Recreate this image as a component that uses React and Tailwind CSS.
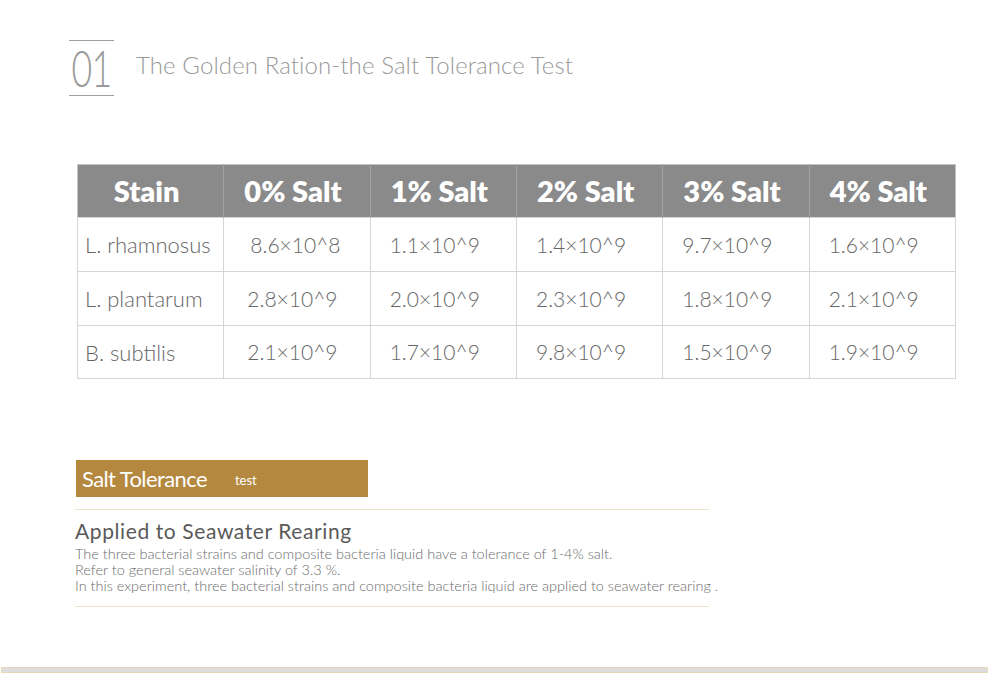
import React from "react";

const headers = ["Stain", "0% Salt", "1% Salt", "2% Salt", "3% Salt", "4% Salt"];
const rows = [
  ["L. rhamnosus", "8.6×10^8", "1.1×10^9", "1.4×10^9", "9.7×10^9", "1.6×10^9"],
  ["L. plantarum", "2.8×10^9", "2.0×10^9", "2.3×10^9", "1.8×10^9", "2.1×10^9"],
  ["B. subtilis", "2.1×10^9", "1.7×10^9", "9.8×10^9", "1.5×10^9", "1.9×10^9"],
];

export default function App() {
  return (
    <div className="w-[990px] h-[699px] bg-white relative overflow-hidden" style={{ fontFamily: "Lato, 'Open Sans', sans-serif" }}>
      {/* Header */}
      <div className="flex items-center pt-[40px] pl-[69px]">
        <div className="w-[45px] h-[56px] border-t border-b border-[#a0a0a0] flex items-center justify-center">
          <span className="text-[51px] leading-none font-light text-[#9a9a9a] scale-x-[0.7] tracking-[-1px] -mt-[2px] whitespace-nowrap">01</span>
        </div>
        <div className="ml-[22px] -mt-[6px] text-[24px] font-light text-[#9a9a9a] tracking-[0.1px]">
          The Golden Ration-the Salt Tolerance Test
        </div>
      </div>

      {/* Table */}
      <div className="mt-[68px] ml-[77px]">
        <table className="table-fixed w-[879px] border-collapse border border-[#c4c4c4]">
          <thead>
            <tr className="h-[53px] bg-[#8a8a8a]">
              {headers.map((h, i) => (
                <th
                  key={h}
                  className={`text-white font-extrabold text-[29px] text-center pr-[8px] ${i > 0 ? "border-l border-[#a3a3a3]" : ""}`}
                >
                  {h}
                </th>
              ))}
            </tr>
          </thead>
          <tbody>
            {rows.map((r, ri) => (
              <tr key={ri} className={ri === 2 ? "h-[53px]" : "h-[54px]"}>
                {r.map((c, ci) => (
                  <td
                    key={ci}
                    className={`border border-[#d6d6d6] font-light text-[#666666] text-left ${
                      ci === 0 ? "pl-[7px] text-[22px]" : ci === 1 ? (ri === 0 ? "pl-[26px] text-[21px]" : "pl-[23px] text-[21px]") : "pl-[19px] text-[21px]"
                    }`}
                  >
                    {c}
                  </td>
                ))}
              </tr>
            ))}
          </tbody>
        </table>
      </div>

      {/* Salt tolerance section */}
      <div className="ml-[75px] mt-[81px] w-[634px]">
        <div className="ml-[1px] w-[292px] h-[37px] bg-[#b4883f] flex items-center pl-[6px]">
          <span className="text-white text-[22px] tracking-[-0.6px] font-normal">Salt Tolerance</span>
          <span className="text-white text-[13px] ml-[28px] mt-[4px]">test</span>
        </div>
        <div className="mt-[12px] h-px bg-[#efe2cc]"></div>
        <div className="mt-[9px] text-[21px] leading-[24px] text-[#5a5a5a] font-normal tracking-[0.6px]">
          Applied to Seawater Rearing
        </div>
        <div className="mt-[3px] text-[14.5px] leading-[16px] text-[#6c6c6c] font-light whitespace-nowrap">
          <div>The three bacterial strains and composite bacteria liquid have a tolerance of 1-4% salt.</div>
          <div>Refer to general seawater salinity of 3.3 %.</div>
          <div>In this experiment, three bacterial strains and composite bacteria liquid are applied to seawater rearing .</div>
        </div>
        <div className="mt-[12px] h-px bg-[#efe2cc]"></div>
      </div>

      {/* Bottom bar */}
      <div className="absolute left-[1px] right-[2px] top-[667px] h-[6px] bg-[#dddddd] border border-[#e6d7b8]"></div>
    </div>
  );
}
